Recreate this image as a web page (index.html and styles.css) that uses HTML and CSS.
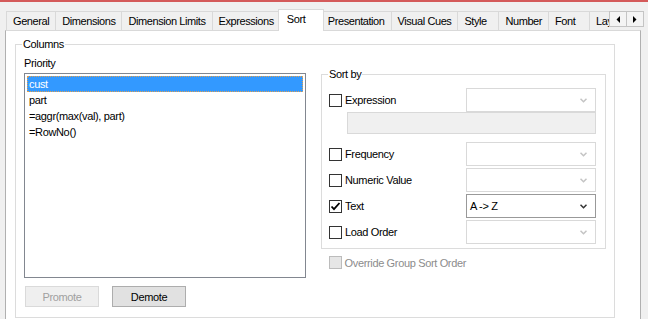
FILE: index.html
```html
<!DOCTYPE html>
<html lang="en">

<head>
  <meta charset="UTF-8">
  <meta name="viewport" content="width=device-width, initial-scale=1.0">
  <title>Chart Properties - Sort</title>
  <link rel="stylesheet" href="styles.css">
</head>

<body>
  <div class="tabstrip">
    <div class="tabs">
      <div class="tab">General</div>
      <div class="tab">Dimensions</div>
      <div class="tab">Dimension Limits</div>
      <div class="tab">Expressions</div>
      <div class="tab active">Sort</div>
      <div class="tab">Presentation</div>
      <div class="tab">Visual Cues</div>
      <div class="tab">Style</div>
      <div class="tab">Number</div>
      <div class="tab">Font</div>
      <div class="tab">Layout</div>
    </div>
    <div class="tab-scroll">
      <span class="scroll-btn"><svg width="4" height="7" viewBox="0 0 4 7"><polygon points="4,0 4,7 0.5,3.5" fill="#000"/></svg></span>
      <span class="scroll-btn"><svg width="4" height="7" viewBox="0 0 4 7"><polygon points="0,0 0,7 3.5,3.5" fill="#000"/></svg></span>
    </div>
  </div>

  <div class="panel">
    <fieldset class="group columns">
      <legend>Columns</legend>
      <div class="columns-body">
        <div class="priority">
          <div class="label">Priority</div>
          <ul class="listbox">
            <li class="selected">cust</li>
            <li>part</li>
            <li>=aggr(max(val), part)</li>
            <li>=RowNo()</li>
          </ul>
          <div class="buttons">
            <button type="button" class="btn" disabled>Promote</button>
            <button type="button" class="btn">Demote</button>
          </div>
        </div>

        <div class="sort-side">
          <fieldset class="group sortby">
            <legend>Sort by</legend>
            <div class="row">
              <div class="check"><span class="box"></span>Expression</div>
              <div class="combo disabled"><span class="combo-text"></span><svg class="chev" width="7" height="5" viewBox="0 0 7 5"><polyline points="0.5,0.8 3.5,3.8 6.5,0.8" fill="none" stroke="#c4c4c4" stroke-width="1.5"/></svg></div>
            </div>
            <div class="expr-box"></div>
            <div class="row spaced">
              <div class="check"><span class="box"></span>Frequency</div>
              <div class="combo disabled"><span class="combo-text"></span><svg class="chev" width="7" height="5" viewBox="0 0 7 5"><polyline points="0.5,0.8 3.5,3.8 6.5,0.8" fill="none" stroke="#c4c4c4" stroke-width="1.5"/></svg></div>
            </div>
            <div class="row">
              <div class="check"><span class="box"></span>Numeric Value</div>
              <div class="combo disabled"><span class="combo-text"></span><svg class="chev" width="7" height="5" viewBox="0 0 7 5"><polyline points="0.5,0.8 3.5,3.8 6.5,0.8" fill="none" stroke="#c4c4c4" stroke-width="1.5"/></svg></div>
            </div>
            <div class="row">
              <div class="check"><span class="box checked"><svg width="11" height="11" viewBox="0 0 11 11"><polyline points="1.5,5.5 4,8.2 9.5,2" fill="none" stroke="#000" stroke-width="1.8"/></svg></span>Text</div>
              <div class="combo"><span class="combo-text">A -&gt; Z</span><svg class="chev" width="7" height="5" viewBox="0 0 7 5"><polyline points="0.5,0.8 3.5,3.8 6.5,0.8" fill="none" stroke="#333" stroke-width="1.5"/></svg></div>
            </div>
            <div class="row">
              <div class="check"><span class="box"></span>Load Order</div>
              <div class="combo disabled"><span class="combo-text"></span><svg class="chev" width="7" height="5" viewBox="0 0 7 5"><polyline points="0.5,0.8 3.5,3.8 6.5,0.8" fill="none" stroke="#c4c4c4" stroke-width="1.5"/></svg></div>
            </div>
          </fieldset>
          <div class="check override"><span class="box"></span>Override Group Sort Order</div>
        </div>
      </div>
    </fieldset>
  </div>
</body>

</html>
```

FILE: styles.css
```css
html,
body {
  overflow: hidden;
}

body {
  margin: 0;
  padding: 0;
  background: #f0f0f0;
  border-top: 2px solid #d45a5a;
  font-family: "Liberation Sans", Arial, sans-serif;
  font-size: 11px;
  letter-spacing: -0.35px;
  color: #000;
}

/* tab strip */

.tabstrip {
  display: flex;
  height: 29px;
  padding: 0 4px 0 6px;
}

.tabs {
  display: flex;
  align-items: flex-end;
  flex: 1;
  overflow: hidden;
}

.tab {
  flex-shrink: 0;
  box-sizing: border-box;
  min-width: 42px;
  height: 19px;
  margin-bottom: 1px;
  padding: 0 6px;
  line-height: 18px;
  letter-spacing: -0.42px;
  border: 1px solid #d9d9d9;
  border-bottom: none;
  background: #f0f0f0;
  white-space: nowrap;
}

.tab + .tab {
  margin-left: -1px;
}

.tab.active {
  position: relative;
  z-index: 1;
  min-width: 46px;
  height: 22px;
  margin: 0 -2px 0 -3px;
  padding: 0 8px 3px;
  background: #fff;
}

.tab-scroll {
  display: flex;
  align-self: flex-start;
  margin-top: 9px;
}

.scroll-btn {
  display: flex;
  align-items: center;
  justify-content: center;
  box-sizing: border-box;
  width: 18px;
  height: 16px;
  border: 1px solid #c4c4c4;
  background: #f4f4f4;
}

.scroll-btn + .scroll-btn {
  margin-left: -1px;
}

/* panel */

.panel {
  box-sizing: border-box;
  width: 636px;
  height: 300px;
  margin: -1px 0 0 5px;
  padding: 7px 25px 0 9px;
  background: #fff;
  border: 1px solid #b0b0b0;
  border-top-color: #d9d9d9;
}

.group {
  margin: 0;
  border: 1px solid #dcdcdc;
  min-width: 0;
}

.group legend {
  padding: 0 1px;
  line-height: 13px;
}

.columns {
  box-sizing: border-box;
  height: 280px;
  padding: 6px 8px 0 8px;
}

.columns legend {
  margin-left: -2px;
}

.columns-body {
  display: flex;
}

.priority {
  width: 283px;
}

.label {
  line-height: 13px;
}

.listbox {
  box-sizing: border-box;
  height: 205px;
  margin: 3px 0 0;
  padding: 2px;
  list-style: none;
  border: 1px solid #828790;
  background: #fff;
}

.listbox li {
  height: 16px;
  padding-left: 2px;
  line-height: 16px;
}

.listbox li.selected {
  background: #3399ff;
  color: #fff;
  outline: 1px dotted #e0a050;
  outline-offset: -1px;
}

.buttons {
  display: flex;
  gap: 13px;
  margin-top: 8px;
  padding-left: 1px;
}

.btn {
  box-sizing: border-box;
  width: 74px;
  height: 21px;
  padding: 0;
  font: inherit;
  letter-spacing: inherit;
  color: #000;
  background: #e1e1e1;
  border: 1px solid #adadad;
}

.btn:disabled {
  color: #a0a0a0;
  background: #efefef;
  border-color: #dadada;
}

/* sort by */

.sort-side {
  margin: 11px 0 0 15px;
}

.sortby {
  box-sizing: border-box;
  width: 285px;
  padding: 7px 9px 4px 7px;
}

.sortby legend {
  margin-left: -1px;
}

.row {
  display: flex;
  align-items: center;
  height: 24px;
}

.row + .row {
  margin-top: 2px;
}

.row.spaced {
  margin-top: 8px;
}

.check {
  display: flex;
  align-items: center;
  width: 137px;
  white-space: nowrap;
}

.box {
  display: flex;
  align-items: center;
  justify-content: center;
  box-sizing: border-box;
  width: 13px;
  height: 13px;
  margin-right: 3px;
  border: 1px solid #333;
  background: #fff;
}

.combo {
  display: flex;
  align-items: center;
  box-sizing: border-box;
  width: 130px;
  height: 24px;
  padding: 0 8px 0 3px;
  border: 1px solid #999;
  background: #fff;
}

.combo.disabled {
  border-color: #d9d9d9;
}

.combo-text {
  flex: 1;
}

.expr-box {
  box-sizing: border-box;
  width: 249px;
  height: 22px;
  margin-left: 18px;
  border: 1px solid #d9d9d9;
  background: #f0f0f0;
}

.override {
  height: 13px;
  margin-top: 7px;
  margin-left: 8px;
  color: #8c8c8c;
}

.override .box {
  border-color: #bcbcbc;
  background: #e6e6e6;
}
```
